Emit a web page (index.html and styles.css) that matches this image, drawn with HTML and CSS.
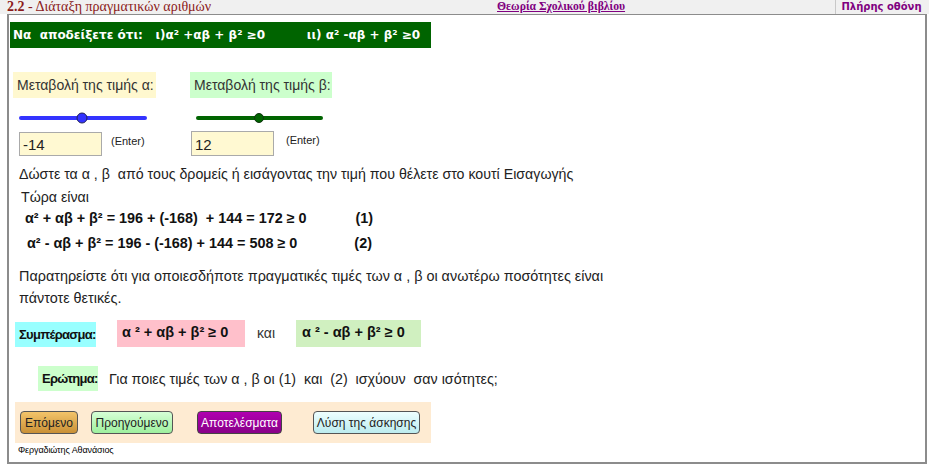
FILE: index.html
```html
<!DOCTYPE html>
<html lang="el">
<head>
<meta charset="utf-8">
<title>2.2 - Διάταξη πραγματικών αριθμών</title>
<link rel="stylesheet" href="styles.css">
</head>
<body>
<div class="topbar">
  <div class="title"><b>2.2</b> - Διάταξη πραγματικών αριθμών</div>
  <a class="theory" href="#">Θεωρία Σχολικού βιβλίου</a>
  <div class="full">Πλήρης οθόνη</div>
</div>
<div class="frame">
  <div class="banner">Να  αποδείξετε ότι:   ι)α² +αβ + β² ≥0          ιι) α² -αβ + β² ≥0</div>

  <div class="controls">
    <div class="ctrl ctrl-a">
      <div class="label label-a">Μεταβολή της τιμής α:</div>
      <svg class="slider" width="130" height="12" viewBox="0 0 130 12">
        <line x1="2" y1="6" x2="126" y2="6" stroke="#3333ff" stroke-width="4" stroke-linecap="round"/>
        <circle cx="63" cy="6" r="5" fill="#3333ff" stroke="#222255" stroke-width="1"/>
      </svg>
      <div class="inrow">
        <div class="input input-a">-14</div>
        <span class="enter">(Enter)</span>
      </div>
    </div>
    <div class="ctrl ctrl-b">
      <div class="label label-b">Μεταβολή της τιμής β:</div>
      <svg class="slider" width="130" height="12" viewBox="0 0 130 12">
        <line x1="2" y1="6" x2="125" y2="6" stroke="#006400" stroke-width="4" stroke-linecap="round"/>
        <circle cx="63" cy="6" r="4.5" fill="#006400" stroke="#113311" stroke-width="1"/>
      </svg>
      <div class="inrow">
        <div class="input input-b">12</div>
        <span class="enter">(Enter)</span>
      </div>
    </div>
  </div>

  <p class="txt give">Δώστε τα α , β  από τους δρομείς ή εισάγοντας την τιμή που θέλετε στο κουτί Εισαγωγής</p>
  <p class="txt now">Τώρα είναι</p>
  <p class="eq eq1">α² + αβ + β² = 196 + (-168)  + 144 = 172 ≥ 0<span class="num n1">(1)</span></p>
  <p class="eq eq2">α² - αβ + β² = 196 - (-168) + 144 = 508 ≥ 0<span class="num n2">(2)</span></p>

  <p class="txt obs">Παρατηρείστε ότι για οποιεσδήποτε πραγματικές τιμές των α , β οι ανωτέρω ποσότητες είναι<br>πάντοτε θετικές.</p>

  <div class="concl">
    <div class="tag tag-c">Συμπέρασμα:</div>
    <div class="box box-pink">α ² + αβ + β² ≥ 0</div>
    <span class="and">και</span>
    <div class="box box-green">α ² - αβ + β² ≥ 0</div>
  </div>

  <div class="question">
    <div class="tag tag-q">Ερώτημα:</div>
    <span class="qtext">Για ποιες τιμές των α , β οι (1)  και  (2)  ισχύουν  σαν ισότητες;</span>
  </div>

  <div class="buttons">
    <button class="btn btn-next">Επόμενο</button>
    <button class="btn btn-prev">Προηγούμενο</button>
    <button class="btn btn-res">Αποτελέσματα</button>
    <button class="btn btn-sol">Λύση της άσκησης</button>
  </div>
  <div class="author">Φεργαδιώτης Αθανάσιος</div>
</div>
</body>
</html>
```
FILE: styles.css
```css
html, body {
  margin: 0;
  padding: 0;
  background: #ffffff;
}
body {
  font-family: "Liberation Sans", Arial, sans-serif;
  color: #222;
  width: 929px;
  height: 465px;
  overflow: hidden;
}
.topbar {
  display: flex;
  align-items: stretch;
  height: 14px;
  background: #f0f0f0;
}
.title {
  flex: 0 0 490px;
  padding-left: 7px;
  box-sizing: border-box;
  font-family: "Liberation Serif", "Times New Roman", serif;
  font-size: 14px;
  line-height: 14px;
  color: #8b1a1a;
  white-space: nowrap;
}
.theory {
  margin-left: 7px;
  font-family: "Liberation Serif", "Times New Roman", serif;
  font-weight: bold;
  font-size: 11.7px;
  line-height: 13px;
  color: #800080;
  white-space: nowrap;
}
.full {
  margin-left: auto;
  margin-right: 2px;
  width: 91px;
  border-left: 1px solid #c8c8c8;
  font-family: "DejaVu Sans", Verdana, sans-serif;
  font-weight: bold;
  font-size: 10px;
  line-height: 14px;
  text-align: center;
  color: #800080;
}
.frame {
  margin: 0 2px 0 7px;
  height: 450px;
  box-sizing: border-box;
  border: 2px solid #8c8c8c;
  border-top-width: 1px;
  padding: 7px 0 0 1px;
}
.banner {
  width: 421px;
  height: 26px;
  box-sizing: border-box;
  background: #006400;
  color: #fff;
  font-family: "DejaVu Sans", Verdana, sans-serif;
  font-weight: bold;
  font-size: 12px;
  line-height: 26px;
  padding-left: 3px;
  white-space: pre;
}
.controls {
  display: flex;
  margin-top: 24px;
  margin-left: 3px;
}
.ctrl {
  display: flex;
  flex-direction: column;
}
.ctrl-b {
  margin-left: 34px;
}
.label {
  height: 26px;
  line-height: 26px;
  font-size: 14px;
  color: #333;
  padding: 0 0 0 4px;
  white-space: nowrap;
}
.label-a { width: 143px; box-sizing: border-box; background: #fff8cf; }
.label-b { width: 142px; box-sizing: border-box; background: #ccffcc; }
.slider {
  display: block;
  margin-top: 14px;
  margin-left: 6px;
}
.inrow {
  display: flex;
  align-items: flex-start;
  margin-top: 8px;
  margin-left: 6px;
}
.ctrl-b .inrow { margin-left: 1px; margin-top: 7px; }
.input {
  width: 83px;
  height: 24px;
  box-sizing: border-box;
  border: 1px solid #aaa;
  background: #fff9d2;
  font-size: 15px;
  line-height: 24px;
  padding-left: 3px;
  color: #222;
}
.ctrl-b .input { height: 25px; line-height: 25px; }
.enter {
  font-size: 11px;
  margin-left: 9px;
  margin-top: 3px;
  color: #222;
}
.ctrl-b .enter { margin-left: 12px; }
.txt, .eq {
  margin: 0;
  font-size: 14.2px;
  white-space: pre;
  color: #222;
}
.give { margin-top: 10px; margin-left: 9px; line-height: 17px; }
.now { margin-top: 6px; margin-left: 11px; line-height: 17px; }
.eq { font-weight: bold; font-size: 14.4px; line-height: 17px; color: #111; }
.eq1 { margin-top: 4px; margin-left: 15px; }
.eq2 { margin-top: 8px; margin-left: 17px; }
.n1 { margin-left: 49px; }
.n2 { margin-left: 57px; }
.obs { margin-top: 13px; margin-left: 9px; line-height: 22px; font-size: 14.4px; }
.concl {
  display: flex;
  align-items: flex-start;
  margin-top: 11px;
  margin-left: 5px;
}
.tag {
  font-family: "Liberation Sans", Arial, sans-serif;
  font-weight: bold;
  font-size: 13px;
  letter-spacing: -0.7px;
  color: #111;
  height: 25px;
  line-height: 25px;
  box-sizing: border-box;
  padding-left: 4px;
  white-space: nowrap;
}
.tag-c { width: 81px; background: #99ffff; margin-top: 2px; }
.box {
  font-weight: bold;
  font-size: 14.5px;
  color: #111;
  height: 27px;
  line-height: 25px;
  box-sizing: border-box;
  padding-left: 5px;
  white-space: pre;
}
.box-pink { width: 128px; background: #ffc0cb; margin-left: 21px; }
.box-green { width: 125px; background: #d0f0c0; margin-left: 21px; padding-left: 6px; }
.and {
  font-size: 14px;
  margin-left: 12px;
  line-height: 27px;
  color: #333;
}
.question {
  display: flex;
  align-items: center;
  margin-top: 19px;
  margin-left: 28px;
}
.tag-q { width: 60px; background: #ccffcc; }
.qtext {
  margin-left: 11px;
  font-size: 14.25px;
  white-space: pre;
  color: #222;
}
.buttons {
  display: flex;
  align-items: center;
  width: 416px;
  height: 41px;
  box-sizing: border-box;
  margin-top: 11px;
  margin-left: 5px;
  background: #feebd2;
  padding-left: 5px;
}
.btn {
  height: 23px;
  box-sizing: border-box;
  border: 1px solid #555;
  border-radius: 4px;
  font-family: "Liberation Sans", Arial, sans-serif;
  font-size: 12px;
  padding: 0;
  white-space: nowrap;
  color: #222;
}
.btn-next { width: 58px; background: linear-gradient(#f3c46a, #c99036); }
.btn-prev { width: 82px; margin-left: 13px; background: linear-gradient(#d6ffd6, #9ef09e); }
.btn-res { width: 85px; margin-left: 24px; background: linear-gradient(#b000b0, #880088); color: #fff; border-color: #444; }
.btn-sol { width: 107px; margin-left: 31px; background: linear-gradient(#eeffff, #bcecef); }
.author {
  margin-top: 1px;
  margin-left: 8px;
  font-size: 9px;
  line-height: 12px;
  color: #000;
  letter-spacing: -0.1px;
}
```
